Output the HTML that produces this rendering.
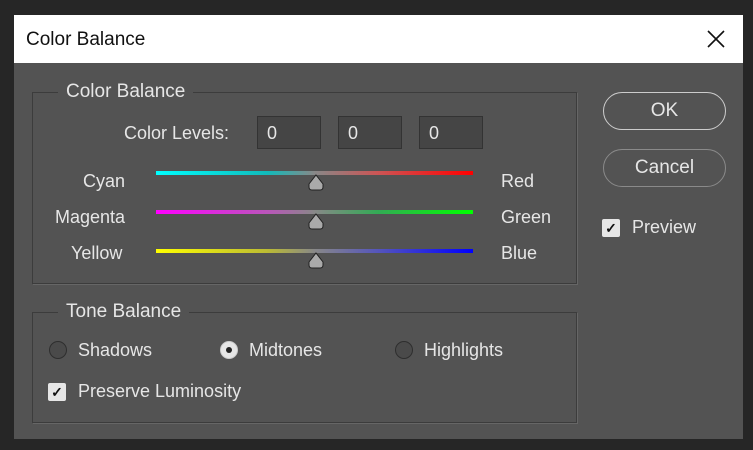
<!DOCTYPE html>
<html><head><style>
body{margin:0;width:753px;height:450px;background:#262626;position:relative;overflow:hidden;font-family:"Liberation Sans",sans-serif;color:#e6e6e6;font-size:18px}
.a{position:absolute;white-space:nowrap}
#dlg{position:absolute;left:14px;top:15px;width:729px;height:424px;background:#535353}
#title{position:absolute;left:14px;top:15px;width:729px;height:48px;background:#fff;color:#111;font-size:19px}
.box{position:absolute;border:1px solid #3c3c3c;box-shadow:1px 1px 0 #666}
.lg{position:absolute;background:#535353;padding:0 8px;font-size:19px}
.inp{position:absolute;width:64px;height:33px;background:#454545;border:1px solid #333;box-sizing:border-box;padding:6px 0 0 9px}
.sl{position:absolute;left:156px;width:317px;height:4px}
.th{position:absolute;left:307px;width:18px;height:17px}
.btn{position:absolute;left:603px;width:123px;height:38px;border:1.5px solid #ccc;border-radius:19px;box-sizing:border-box;text-align:center;line-height:36px;font-size:19px}
.cb{position:absolute;width:18px;height:18px;background:#e6e6e6;border-radius:2px;color:#111;font-size:14px;text-align:center;line-height:18px;font-weight:bold}
.rd{position:absolute;width:18px;height:18px;border:1.5px solid #2e2e2e;border-radius:50%;box-sizing:border-box;background:#4a4a4a}
</style></head><body>
<div id="dlg"></div>
<div id="title"><span class="a" style="left:12px;top:14px">Color Balance</span>
<svg class="a" style="left:693px;top:15px" width="18" height="18"><path d="M1 1L17 17M17 1L1 17" stroke="#111" stroke-width="1.6"/></svg></div>

<div class="box" style="left:32px;top:92px;width:543px;height:190px"></div>
<div class="lg" style="left:58px;top:81px">Color Balance</div>
<span class="a" style="left:124px;top:123px">Color Levels:</span>
<div class="inp" style="left:257px;top:116px">0</div>
<div class="inp" style="left:338px;top:116px">0</div>
<div class="inp" style="left:419px;top:116px">0</div>

<span class="a" style="left:83px;top:171px">Cyan</span>
<span class="a" style="left:55px;top:207px">Magenta</span>
<span class="a" style="left:71px;top:243px">Yellow</span>
<span class="a" style="left:501px;top:171px">Red</span>
<span class="a" style="left:501px;top:207px">Green</span>
<span class="a" style="left:501px;top:243px">Blue</span>
<div class="sl" style="top:171px;background:linear-gradient(90deg,#0ff,#1bb 35%,#888 50%,#c55 70%,#f00)"></div>
<div class="sl" style="top:210px;background:linear-gradient(90deg,#f0f,#b5b 35%,#888 50%,#3a5 70%,#0f0)"></div>
<div class="sl" style="top:249px;background:linear-gradient(90deg,#ff0,#bb3 35%,#888 50%,#55b 70%,#00f)"></div>
<svg class="th" style="top:174px" viewBox="0 0 18 17"><path d="M9 1L16 10V13Q16 16 13 16H5Q2 16 2 13V10Z" fill="#aaa" stroke="#222"/></svg>
<svg class="th" style="top:213px" viewBox="0 0 18 17"><path d="M9 1L16 10V13Q16 16 13 16H5Q2 16 2 13V10Z" fill="#aaa" stroke="#222"/></svg>
<svg class="th" style="top:252px" viewBox="0 0 18 17"><path d="M9 1L16 10V13Q16 16 13 16H5Q2 16 2 13V10Z" fill="#aaa" stroke="#222"/></svg>

<div class="box" style="left:32px;top:312px;width:543px;height:109px"></div>
<div class="lg" style="left:58px;top:301px">Tone Balance</div>
<div class="rd" style="left:49px;top:341px"></div><span class="a" style="left:78px;top:340px">Shadows</span>
<div class="rd" style="left:220px;top:341px;background:#e6e6e6;border-color:#ccc"><div style="position:absolute;left:4.5px;top:4.5px;width:6px;height:6px;border-radius:50%;background:#222"></div></div><span class="a" style="left:249px;top:340px">Midtones</span>
<div class="rd" style="left:395px;top:341px"></div><span class="a" style="left:424px;top:340px">Highlights</span>
<div class="cb" style="left:48px;top:383px">✓</div><span class="a" style="left:78px;top:381px">Preserve Luminosity</span>

<div class="btn" style="top:92px">OK</div>
<div class="btn" style="top:149px;border-color:#8a8a8a">Cancel</div>
<div class="cb" style="left:602px;top:219px">✓</div><span class="a" style="left:632px;top:217px">Preview</span>
</body></html>
